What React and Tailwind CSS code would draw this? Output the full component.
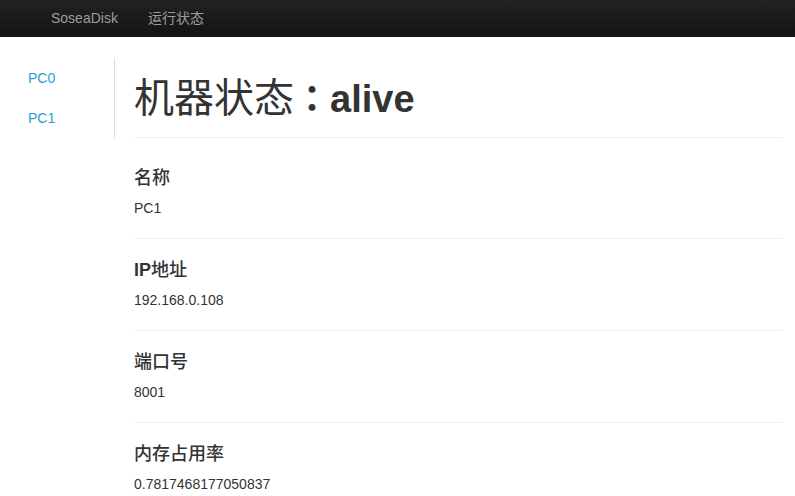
const machines = ['PC0', 'PC1'];

const fields = [
  { label: '名称', value: 'PC1' },
  { label: 'IP地址', value: '192.168.0.108' },
  { label: '端口号', value: '8001' },
  { label: '内存占用率', value: '0.7817468177050837' },
];

const sans = "font-['Liberation_Sans','Noto_Sans_CJK_SC',sans-serif]";

const Label = ({ text }) => {
  // split latin and CJK so the CJK part can be lighter like the original
  const m = text.match(/^([A-Za-z]*)(.*)$/);
  return (
    <>
      {m[1] && <span className="font-bold">{m[1]}</span>}
      <span className="font-medium">{m[2]}</span>
    </>
  );
};

export default function App() {
  return (
    <div className={`min-h-screen bg-white text-[#333] ${sans}`}>

      {/* ── Navbar ── */}
      <nav className="h-[37px] bg-gradient-to-b from-[#222] to-[#131313] flex items-center pl-[51px] gap-[30px] text-[14px] text-[#9d9d9d]">
        <span>SoseaDisk</span>
        <span>运行状态</span>
      </nav>

      <div className="flex mt-[21px]">

        {/* ── Sidebar ── */}
        <div className="w-[115px] shrink-0">
          <ul className="border-r border-[#ddd] pl-[28px]">
            {machines.map((m) => (
              <li key={m} className="h-[40px] flex items-center text-[14px] text-[#2a9fd6]">
                {m}
              </li>
            ))}
          </ul>
        </div>

        {/* ── Main ── */}
        <div className="flex-1 pl-[19px] pr-[13px]">
          <h1 className="mt-[17px] h-[63px] leading-[42px] text-[38px] pb-[20px] border-b border-[#eee] whitespace-nowrap">
            <span className="font-normal text-[40px]">机器状态</span>
            <span className="font-bold text-[36px] font-['Noto_Sans_CJK_TC',sans-serif]">：</span>
            <span className="font-bold">alive</span>
          </h1>

          {fields.map((f, i) => (
            <div key={f.label}>
              {i > 0 && <hr className="mt-[20px] border-0 border-t border-[#eee]" />}
              <h4 className={`${i === 0 ? 'mt-[30px]' : 'mt-[21px]'} text-[18px] leading-[20px]`}>
                <Label text={f.label} />
              </h4>
              <p className="mt-[10px] text-[14px] leading-[20px]">{f.value}</p>
            </div>
          ))}
        </div>
      </div>
    </div>
  );
}
